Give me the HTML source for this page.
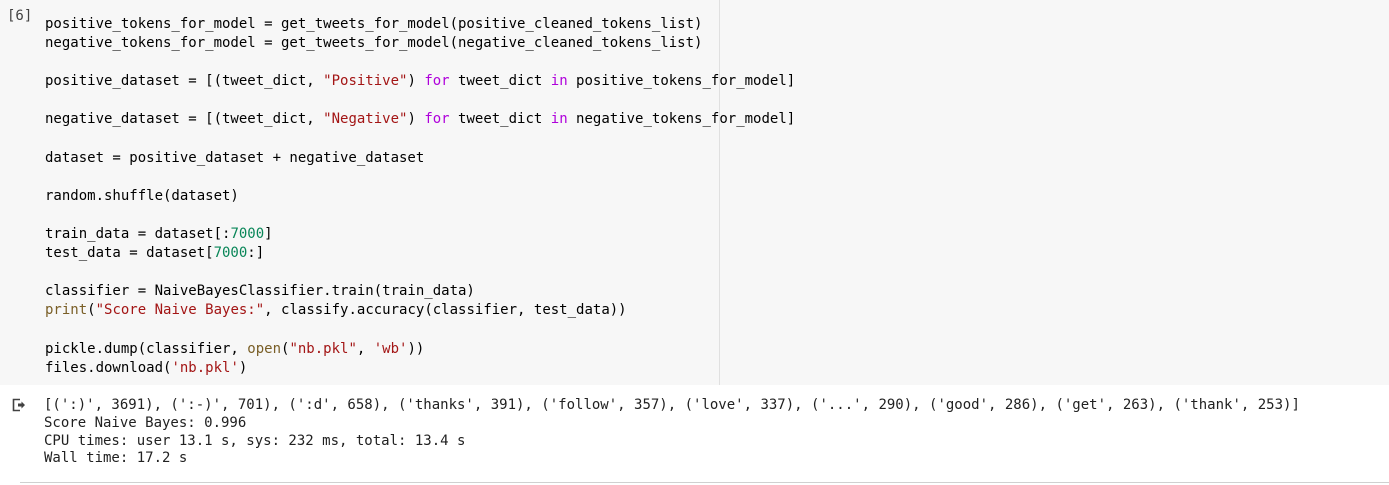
<!DOCTYPE html>
<html><head><style>
body{margin:0;width:1389px;height:485px;background:#fff;overflow:hidden;font-family:"DejaVu Sans Mono","Liberation Mono",monospace;font-size:14px;color:#212121}
.cell{position:absolute;left:0;top:0;width:1389px;height:385px;background:#f7f7f7}
.ruler{position:absolute;left:719px;top:0;width:1px;height:385px;background:#e0e0e0}
.num{position:absolute;left:7px;top:8px;font-size:14px;color:#424242}
pre{margin:0;font:inherit;position:absolute;left:45px;top:15px;line-height:19.1px;color:#000}
.out{position:absolute;left:44px;top:397px;margin:0;font:inherit;line-height:17.8px;color:#212121;white-space:pre}
.s{color:#a31515}.k{color:#af00db}.n{color:#098658}.f{color:#795e26}
.bot{position:absolute;left:20px;top:482px;width:1369px;height:1px;background:#d0d0d0}
</style></head><body>
<div class="cell"></div><div class="ruler"></div>
<div class="num">[6]</div>
<pre>positive_tokens_for_model = get_tweets_for_model(positive_cleaned_tokens_list)
negative_tokens_for_model = get_tweets_for_model(negative_cleaned_tokens_list)

positive_dataset = [(tweet_dict, <span class="s">"Positive"</span>) <span class="k">for</span> tweet_dict <span class="k">in</span> positive_tokens_for_model]

negative_dataset = [(tweet_dict, <span class="s">"Negative"</span>) <span class="k">for</span> tweet_dict <span class="k">in</span> negative_tokens_for_model]

dataset = positive_dataset + negative_dataset

random.shuffle(dataset)

train_data = dataset[:<span class="n">7000</span>]
test_data = dataset[<span class="n">7000</span>:]

classifier = NaiveBayesClassifier.train(train_data)
<span class="f">print</span>(<span class="s">"Score Naive Bayes:"</span>, classify.accuracy(classifier, test_data))

pickle.dump(classifier, <span class="f">open</span>(<span class="s">"nb.pkl"</span>, <span class="s">'wb'</span>))
files.download(<span class="s">'nb.pkl'</span>)</pre>
<svg style="position:absolute;left:12px;top:398px" width="14" height="14" viewBox="0 0 14 14"><path d="M8 1.5H1.5v11H8" fill="none" stroke="#424242" stroke-width="1.6"/><path d="M6 5.5h3.5V3.5L13 7l-3.5 3.5V8.5H6z" fill="#424242"/></svg>
<div class="out">[(':)', 3691), (':-)', 701), (':d', 658), ('thanks', 391), ('follow', 357), ('love', 337), ('...', 290), ('good', 286), ('get', 263), ('thank', 253)]
Score Naive Bayes: 0.996
CPU times: user 13.1 s, sys: 232 ms, total: 13.4 s
Wall time: 17.2 s</div>
<div class="bot"></div>
</body></html>
